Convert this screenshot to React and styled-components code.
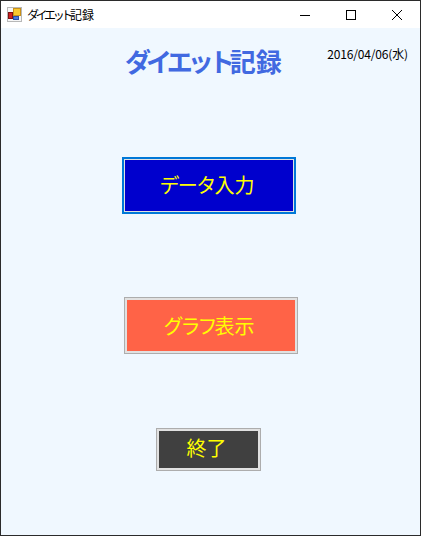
import React from "react";
import styled, { createGlobalStyle } from "styled-components";

const GlobalStyle = createGlobalStyle`
  html, body {
    margin: 0;
    padding: 0;
    background: #f0f8ff;
  }
`;

const Window = styled.div`
  box-sizing: border-box;
  width: 421px;
  height: 536px;
  display: flex;
  flex-direction: column;
  border: 1px solid #2b2b2b;
  background: #f0f8ff;
  font-family: "Noto Sans CJK JP", sans-serif;
  overflow: hidden;
`;

const TitleBar = styled.div`
  height: 27px;
  flex: none;
  display: flex;
  align-items: center;
  background: #ffffff;
  padding-left: 6px;
`;

const TitleText = styled.span`
  margin-left: 5px;
  font-size: 12px;
  color: #000000;
  white-space: nowrap;
`;

// MS UI Gothic kana are narrower than its kanji
const Kana = styled.span`
  letter-spacing: ${(p) => p.$squeeze}px;
`;

const Controls = styled.div`
  margin-left: auto;
  display: flex;
  height: 100%;
`;

const Control = styled.div`
  width: 46px;
  display: flex;
  align-items: center;
  justify-content: center;
`;

const Content = styled.div`
  flex: 1;
  display: flex;
  flex-direction: column;
  align-items: flex-start;
`;

const Header = styled.div`
  display: flex;
  align-items: flex-start;
  height: 129px;
  width: 100%;
`;

const Heading = styled.h1`
  margin: 13px 0 0 124px;
  font-size: 26px;
  line-height: 40px;
  font-weight: 700;
  color: #4169e1;
  white-space: nowrap;
`;

const DateLabel = styled.span`
  margin: 17px 12px 0 auto;
  font-size: 12px;
  line-height: 18px;
  letter-spacing: -0.15px;
  color: #000000;
  white-space: nowrap;
`;

const MenuButton = styled.button`
  box-sizing: border-box;
  width: ${(p) => p.$width}px;
  height: ${(p) => p.$height}px;
  margin-left: ${(p) => p.$left}px;
  margin-top: ${(p) => p.$top}px;
  padding: 0 4px ${(p) => p.$lift}px 0;
  background: ${(p) => p.$fill};
  border: ${(p) => (p.$focused ? "1px" : "2px")} solid #e1e1e1;
  outline: ${(p) => (p.$focused ? "2px solid #0078d7" : "1px solid #adadad")};
  outline-offset: 0;
  color: #ffff00;
  font-family: inherit;
  font-size: 20px;
  line-height: 1;
  white-space: nowrap;
`;

const AppIcon = () => (
  <svg width="15" height="15" viewBox="0 0 15 15" shapeRendering="crispEdges">
    <rect x="0.5" y="0.5" width="14" height="14" fill="#f6f6f6" stroke="#b8b8b8" />
    <rect x="6" y="1" width="7" height="7" fill="#f8c830" stroke="#c89018" strokeWidth="1" />
    <rect x="1.5" y="5" width="4" height="6" fill="#d02020" stroke="#801010" strokeWidth="1" />
    <rect x="6.5" y="9.5" width="5" height="3" fill="#4878e0" stroke="#2850a8" strokeWidth="1" />
  </svg>
);

const MinimizeIcon = () => (
  <svg width="10" height="10" viewBox="0 0 10 10" shapeRendering="crispEdges">
    <path d="M0 5.5H10" stroke="#000" strokeWidth="1" />
  </svg>
);

const MaximizeIcon = () => (
  <svg width="10" height="10" viewBox="0 0 10 10" shapeRendering="crispEdges">
    <rect x="0.5" y="0.5" width="9" height="9" fill="none" stroke="#000" />
  </svg>
);

const CloseIcon = () => (
  <svg width="10" height="10" viewBox="0 0 10 10">
    <path d="M0 0L10 10M10 0L0 10" stroke="#000" strokeWidth="1" />
  </svg>
);

export default function App() {
  return (
    <>
      <GlobalStyle />
      <Window>
        <TitleBar>
          <AppIcon />
          <TitleText>
            <Kana $squeeze={-3.4}>ダイエット</Kana>記録
          </TitleText>
          <Controls>
            <Control><MinimizeIcon /></Control>
            <Control><MaximizeIcon /></Control>
            <Control><CloseIcon /></Control>
          </Controls>
        </TitleBar>
        <Content>
          <Header>
            <Heading>
              <Kana $squeeze={-5}>ダイエット</Kana>記録
            </Heading>
            <DateLabel>2016/04/06(水)</DateLabel>
          </Header>
          <MenuButton $focused $fill="#0000cd" $width={170} $height={53} $left={123} $top={2} $lift={1}>
            <Kana $squeeze={-1.7}>データ</Kana>入力
          </MenuButton>
          <MenuButton $fill="#ff6347" $width={172} $height={55} $left={124} $top={86} $lift={0}>
            <Kana $squeeze={-3}>グラフ</Kana>表示
          </MenuButton>
          <MenuButton $fill="#404040" $width={103} $height={41} $left={156} $top={76} $lift={3}>
            終了
          </MenuButton>
        </Content>
      </Window>
    </>
  );
}
